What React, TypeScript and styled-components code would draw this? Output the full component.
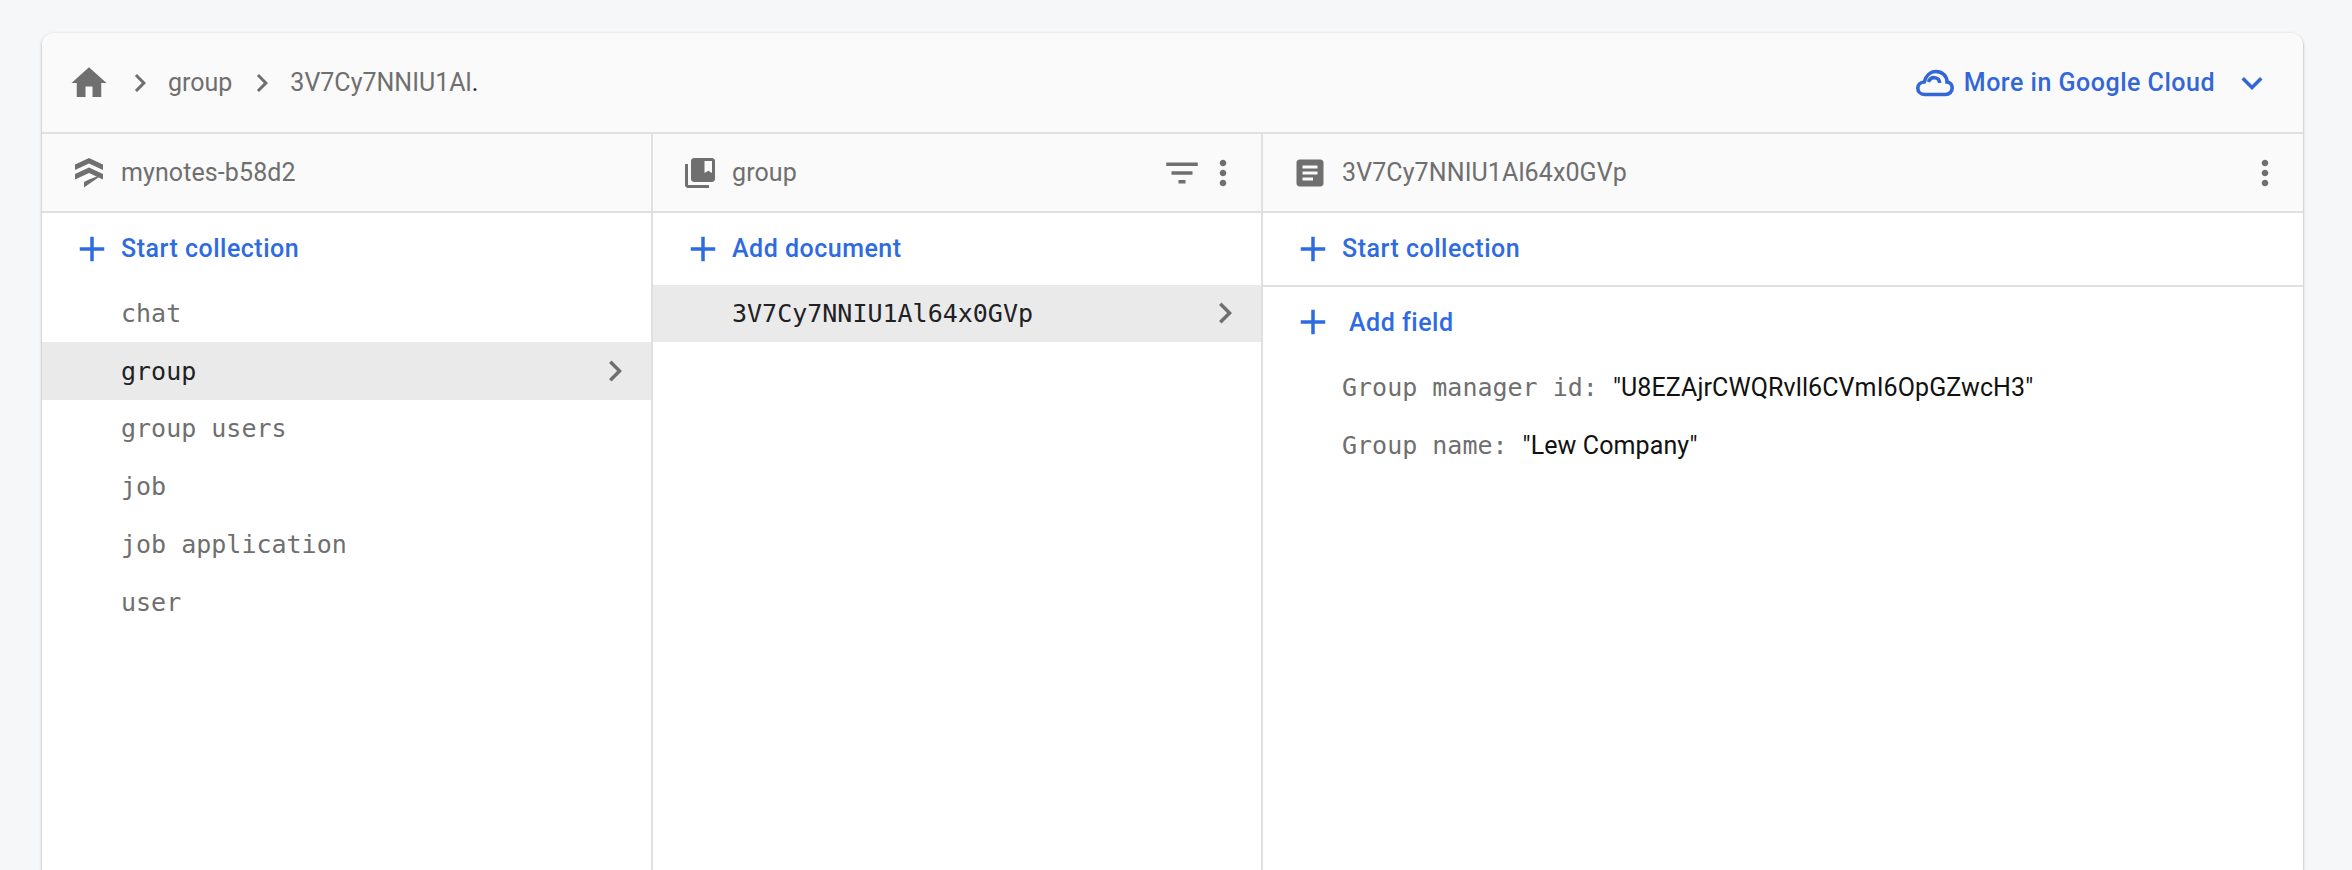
import {FC} from "react";
import styled, {createGlobalStyle} from "styled-components";

const GlobalStyle = createGlobalStyle`
    html, body {
        margin: 0;
        padding: 0;
        background: #f6f7f9;
    }
`;

const ICONS = {
    home: "M10 20v-6h4v6h5v-8h3L12 3 2 12h3v8z",
    chevron: "M10 6L8.59 7.41 13.17 12l-4.58 4.59L10 18l6-6z",
    add: "M19 13h-6v6h-2v-6H5v-2h6V5h2v6h6v2z",
    more: "M12 8c1.1 0 2-.9 2-2s-.9-2-2-2-2 .9-2 2 .9 2 2 2zm0 2c-1.1 0-2 .9-2 2s.9 2 2 2 2-.9 2-2-.9-2-2-2zm0 6c-1.1 0-2 .9-2 2s.9 2 2 2 2-.9 2-2-.9-2-2-2z",
    filter: "M10 18h4v-2h-4v2zM3 6v2h18V6H3zm3 7h12v-2H6v2z",
    doc: "M19 3H5c-1.1 0-2 .9-2 2v14c0 1.1.9 2 2 2h14c1.1 0 2-.9 2-2V5c0-1.1-.9-2-2-2zm-5 14H7v-2h7v2zm3-4H7v-2h10v2zm0-4H7V7h10v2z",
    collection: "M4 6H2v14c0 1.1.9 2 2 2h14v-2H4V6zm16-4H8c-1.1 0-2 .9-2 2v12c0 1.1.9 2 2 2h12c1.1 0 2-.9 2-2V4c0-1.1-.9-2-2-2zm0 10l-2.5-1.5L15 12V4h5v8z",
    expand: "M16.59 8.59L12 13.17 7.41 8.59 6 10l6 6 6-6z",
};

const Icon: FC<{name: keyof typeof ICONS; size: number; color?: string}> = ({name, size, color = "#6f6f6f"}) => (
    <IconSvg width={size} height={size} viewBox="0 0 24 24" fill={color}>
        <path d={ICONS[name]} />
    </IconSvg>
);

const CloudIcon = () => (
    <IconSvg width={38} height={28} viewBox="0 0 38 28" fill="none" stroke="#3367d6" strokeWidth={3.6}>
        <path d="M9 25.500c-4 0-7.200-2.600-7.200-6.300 0-3.500 2.800-6 6.400-6.200C9.800 7 14.200 2.500 20 2.500c6.300 0 11 4.500 11 10.500 3.300.3 5.200 2.800 5.200 6 0 3.700-3 6.500-6.600 6.500z" />
        <path d="M12.500 13c1-3 3.700-4.600 6.300-4.300 2.800.3 4.700 2.300 4.900 5.300" />
    </IconSvg>
);

const FirestoreIcon = () => (
    <IconSvg width={36} height={36} viewBox="0 0 36 36" fill="#6f6f6f">
        <path d="M18 3l14 6.500v5.500L18 8.500 4 15V9.500z" />
        <path d="M18 12.500l14 6.500v5.500L18 18 4 24.500V19z" />
        <path d="M18 25l9-3.500v1.800L13 33v-5.500z" transform="translate(0 -.5)" />
    </IconSvg>
);

const ActionLink: FC<{label: string; wide?: boolean}> = ({label, wide}) => (
    <ActionRow>
        <Icon name="add" size={42} color="#2f6be0" />
        <ActionLabel $wide={wide}>{label}</ActionLabel>
    </ActionRow>
);

const COLLECTIONS = ["chat", "group", "group users", "job", "job application", "user"];

const FIELDS = [
    {name: "Group manager id:", value: '"U8EZAjrCWQRvll6CVmI6OpGZwcH3"'},
    {name: "Group name:", value: '"Lew Company"'},
];

export default function App() {
    return (
        <Page>
            <GlobalStyle />
            <Card>
                <TopBar>
                    <Breadcrumbs>
                        <Icon name="home" size={42} />
                        <Crumb>
                            <Icon name="chevron" size={36} />
                            <CrumbText>group</CrumbText>
                        </Crumb>
                        <Crumb>
                            <Icon name="chevron" size={36} />
                            <CrumbText>
                                3V7Cy7NNIU1Al<CrumbDot>.</CrumbDot>
                            </CrumbText>
                        </Crumb>
                    </Breadcrumbs>
                    <CloudLink>
                        <CloudIcon />
                        <CloudLabel>More in Google Cloud</CloudLabel>
                        <Icon name="expand" size={42} color="#3367d6" />
                    </CloudLink>
                </TopBar>
                <Columns>
                    <Column>
                        <ColumnHeader>
                            <FirestoreIcon />
                            <ColumnTitle>mynotes-b58d2</ColumnTitle>
                        </ColumnHeader>
                        <ActionLink label="Start collection" />
                        {COLLECTIONS.map((name) => (
                            <ListRow key={name} $selected={name === "group"}>
                                {name}
                                {name === "group" && <Icon name="chevron" size={42} />}
                            </ListRow>
                        ))}
                    </Column>
                    <Column>
                        <ColumnHeader>
                            <Icon name="collection" size={36} />
                            <ColumnTitle>group</ColumnTitle>
                            <HeaderActions>
                                <Icon name="filter" size={42} />
                                <Icon name="more" size={40} />
                            </HeaderActions>
                        </ColumnHeader>
                        <ActionLink label="Add document" />
                        <ListRow $selected>
                            3V7Cy7NNIU1Al64x0GVp
                            <Icon name="chevron" size={42} />
                        </ListRow>
                    </Column>
                    <LastColumn>
                        <ColumnHeader>
                            <Icon name="doc" size={36} />
                            <ColumnTitle>3V7Cy7NNIU1Al64x0GVp</ColumnTitle>
                            <HeaderActions>
                                <Icon name="more" size={40} />
                            </HeaderActions>
                        </ColumnHeader>
                        <ActionDivider>
                            <ActionLink label="Start collection" />
                        </ActionDivider>
                        <ActionLink label="Add field" wide />
                        {FIELDS.map((field) => (
                            <FieldRow key={field.name}>
                                <FieldName>{field.name}</FieldName>
                                <FieldValue>{field.value}</FieldValue>
                            </FieldRow>
                        ))}
                    </LastColumn>
                </Columns>
            </Card>
        </Page>
    );
}

const Page = styled.div`
    box-sizing: border-box;
    height: 870px;
    overflow: hidden;
    padding: 33px 49px 0 42px;
    display: flex;
    font-family: Roboto, "Liberation Sans", sans-serif;
`;

const Card = styled.div`
    flex: 1;
    display: flex;
    flex-direction: column;
    background: #fff;
    border-radius: 12px 12px 0 0;
    box-shadow: 0 1px 3px rgba(60, 64, 67, 0.35), 0 1px 2px rgba(60, 64, 67, 0.2);
    overflow: hidden;
`;

const IconSvg = styled.svg`
    flex: none;
    display: block;
`;

const TopBar = styled.div`
    height: 99px;
    flex: none;
    display: flex;
    align-items: center;
    justify-content: space-between;
    background: #fafafa;
    border-bottom: 2px solid #e0e0e0;
    padding: 0 30px 0 26px;
`;

const Breadcrumbs = styled.div`
    display: flex;
    align-items: center;
`;

const Crumb = styled.div`
    display: flex;
    align-items: center;
    margin-left: 12px;
`;

const CrumbText = styled.span`
    font-size: 25px;
    color: #6f6f6f;
    margin-left: 10px;
`;

const CrumbDot = styled.span`
    color: #202124;
`;

const CloudLink = styled.div`
    display: flex;
    align-items: center;
`;

const CloudLabel = styled.span`
    font-size: 25px;
    font-weight: 500;
    letter-spacing: 0.5px;
    color: #3367d6;
    margin: 0 16px 0 10px;
`;

const Columns = styled.div`
    flex: 1;
    display: grid;
    grid-template-columns: 611px 610px 1fr;
`;

const Column = styled.div`
    border-right: 2px solid #e0e0e0;
`;

const LastColumn = styled.div`
    min-width: 0;
`;

const ColumnHeader = styled.div`
    height: 77px;
    display: flex;
    align-items: center;
    gap: 14px;
    padding: 0 18px 0 29px;
    background: #fafafa;
    border-bottom: 2px solid #e0e0e0;
`;

const ColumnTitle = styled.span`
    font-size: 25px;
    letter-spacing: 0.1px;
    color: #6f6f6f;
`;

const HeaderActions = styled.div`
    margin-left: auto;
    display: flex;
    align-items: center;
`;

const ActionRow = styled.div`
    height: 71.6px;
    display: flex;
    align-items: center;
    padding-left: 29px;
`;

const ActionLabel = styled.span<{$wide?: boolean}>`
    font-size: 25px;
    font-weight: 500;
    letter-spacing: 0.5px;
    color: #2f6be0;
    margin-left: ${(p) => (p.$wide ? "15px" : "8px")};
`;

const ActionDivider = styled.div`
    border-bottom: 2px solid #e0e0e0;
`;

const ListRow = styled.div<{$selected?: boolean}>`
    height: 57.75px;
    display: flex;
    align-items: center;
    justify-content: space-between;
    padding: 0 15px 0 79px;
    font-family: "DejaVu Sans Mono", monospace;
    font-size: 25px;
    background: ${(p) => (p.$selected ? "#eaeaea" : "transparent")};
    color: ${(p) => (p.$selected ? "#202124" : "#6f6f6f")};
`;

const FieldRow = styled.div`
    height: 58px;
    display: flex;
    align-items: center;
    padding-left: 79px;
    gap: 15px;
`;

const FieldName = styled.span`
    font-family: "DejaVu Sans Mono", monospace;
    font-size: 25px;
    color: #6f6f6f;
`;

const FieldValue = styled.span`
    font-size: 25px;
    letter-spacing: 0.1px;
    color: #111;
`;
